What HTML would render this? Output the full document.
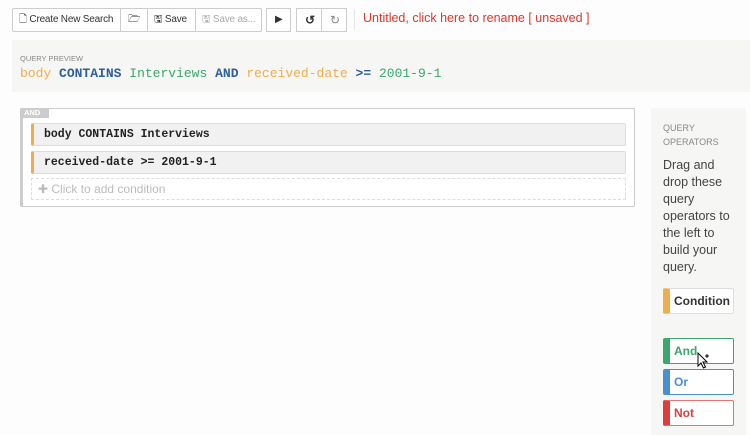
<!DOCTYPE html>
<html><head><style>
*{box-sizing:border-box;margin:0;padding:0}
body{width:750px;height:435px;background:#fdfdfd;font-family:"Liberation Sans",sans-serif;position:relative;overflow:hidden;color:#333}
.a{position:absolute}
.btn{position:absolute;top:8px;height:24px;border:1px solid #ccc;background:#fff;font-size:10px;line-height:22px;color:#333;padding-left:6px;white-space:nowrap;overflow:hidden;letter-spacing:-0.2px}
.mono{font-family:"Liberation Mono",monospace}
.row{position:absolute;left:31px;width:595px;height:23px;background:#f1f1f1;border:1px solid #ddd;border-left:3px solid #f0ad4e;border-radius:2px;font-family:"Liberation Mono",monospace;font-weight:bold;font-size:11.5px;line-height:21px;padding-left:10px;color:#222}
.op{position:absolute;left:663px;width:71px;height:26px;background:#fff;border:1px solid #ccc;border-left:7px solid;border-radius:2px;font-size:12px;font-weight:bold;line-height:24px;padding-left:4px;white-space:nowrap}
</style></head><body>
<div class="btn" style="left:12px;width:109px;border-radius:2px 0 0 2px">🗋 Create New Search</div>
<div class="btn" style="left:120px;width:28px;padding-left:7px">🗁</div>
<div class="btn" style="left:147px;width:49px">🖫 Save</div>
<div class="btn" style="left:195px;width:67px;color:#aaa;border-radius:0 2px 2px 0">🖫 Save as...</div>
<div class="btn" style="left:266px;width:25px;padding-left:8px;font-size:10px">▶</div>
<div class="btn" style="left:296px;width:26px;padding-left:8px;font-weight:bold;font-size:12px">↺</div>
<div class="btn" style="left:321px;width:26px;padding-left:8px;color:#888;font-size:12px">↻</div>
<div class="a" style="left:354px;top:10px;width:1px;height:20px;background:#e5e5e5"></div>
<div class="a" style="left:363px;top:11px;font-size:12.5px;color:#d9382e">Untitled, click here to rename [ unsaved ]</div>
<div class="a" style="left:12px;top:40px;width:738px;height:52px;background:#f6f6f4"></div>
<div class="a" style="left:20px;top:54px;font-size:7.5px;color:#888">QUERY PREVIEW</div>
<div class="a mono" style="left:20px;top:66px;font-size:13px;white-space:pre"><span style="color:#f0ad4e">body</span> <b style="color:#2f5f9e">CONTAINS</b> <span style="color:#3aa76d">Interviews</span> <b style="color:#2f5f9e">AND</b> <span style="color:#f0ad4e">received-date</span> <b style="color:#2f5f9e">&gt;=</b> <span style="color:#3aa76d">2001-9-1</span></div>
<div class="a" style="left:20px;top:108px;width:615px;height:99px;border:1px solid #ccc;border-left:3px solid #ccc;background:#fff;border-radius:2px"></div>
<div class="a" style="left:21px;top:108px;width:28px;height:10px;background:#ccc;color:#fff;font-size:7.5px;font-weight:bold;line-height:10px;padding-left:3px">AND</div>
<div class="row" style="top:123px">body CONTAINS Interviews</div>
<div class="row" style="top:151px">received-date &gt;= 2001-9-1</div>
<div class="a" style="left:31px;top:178px;width:595px;height:22px;border:1px dashed #ddd;font-size:12px;color:#bbb;line-height:20px;padding-left:6px">✚ Click to add condition</div>
<div class="a" style="left:651px;top:108px;width:95px;height:327px;background:#f6f6f4"></div>
<div class="a" style="left:663px;top:121px;font-size:9px;color:#888;line-height:14px">QUERY<br>OPERATORS</div>
<div class="a" style="left:663px;top:157px;width:74px;font-size:12.5px;line-height:17px;color:#444">Drag and drop these query operators to the left to build your query.</div>
<div class="op" style="top:288px;color:#333;border-color:#ddd;border-left-color:#f0ad4e">Condition</div>
<div class="op" style="top:338px;border-color:#3aa76d;color:#3aa76d">And</div>
<div class="op" style="top:369px;border-color:#4a90d0;color:#4a90d0">Or</div>
<div class="op" style="top:400px;border-color:#e57373;border-left-color:#e03c3c;color:#e03c3c">Not</div>
<svg class="a" style="left:697px;top:352px" width="14" height="18" viewBox="0 0 14 18"><path d="M1 1 L1 14 L4 11 L6.5 16 L8.5 15 L6 10 L10 10 Z" fill="#fff" stroke="#000" stroke-width="1"/><path d="M10 2v4M8 4h4" stroke="#000" stroke-width="1"/></svg>
</body></html>
